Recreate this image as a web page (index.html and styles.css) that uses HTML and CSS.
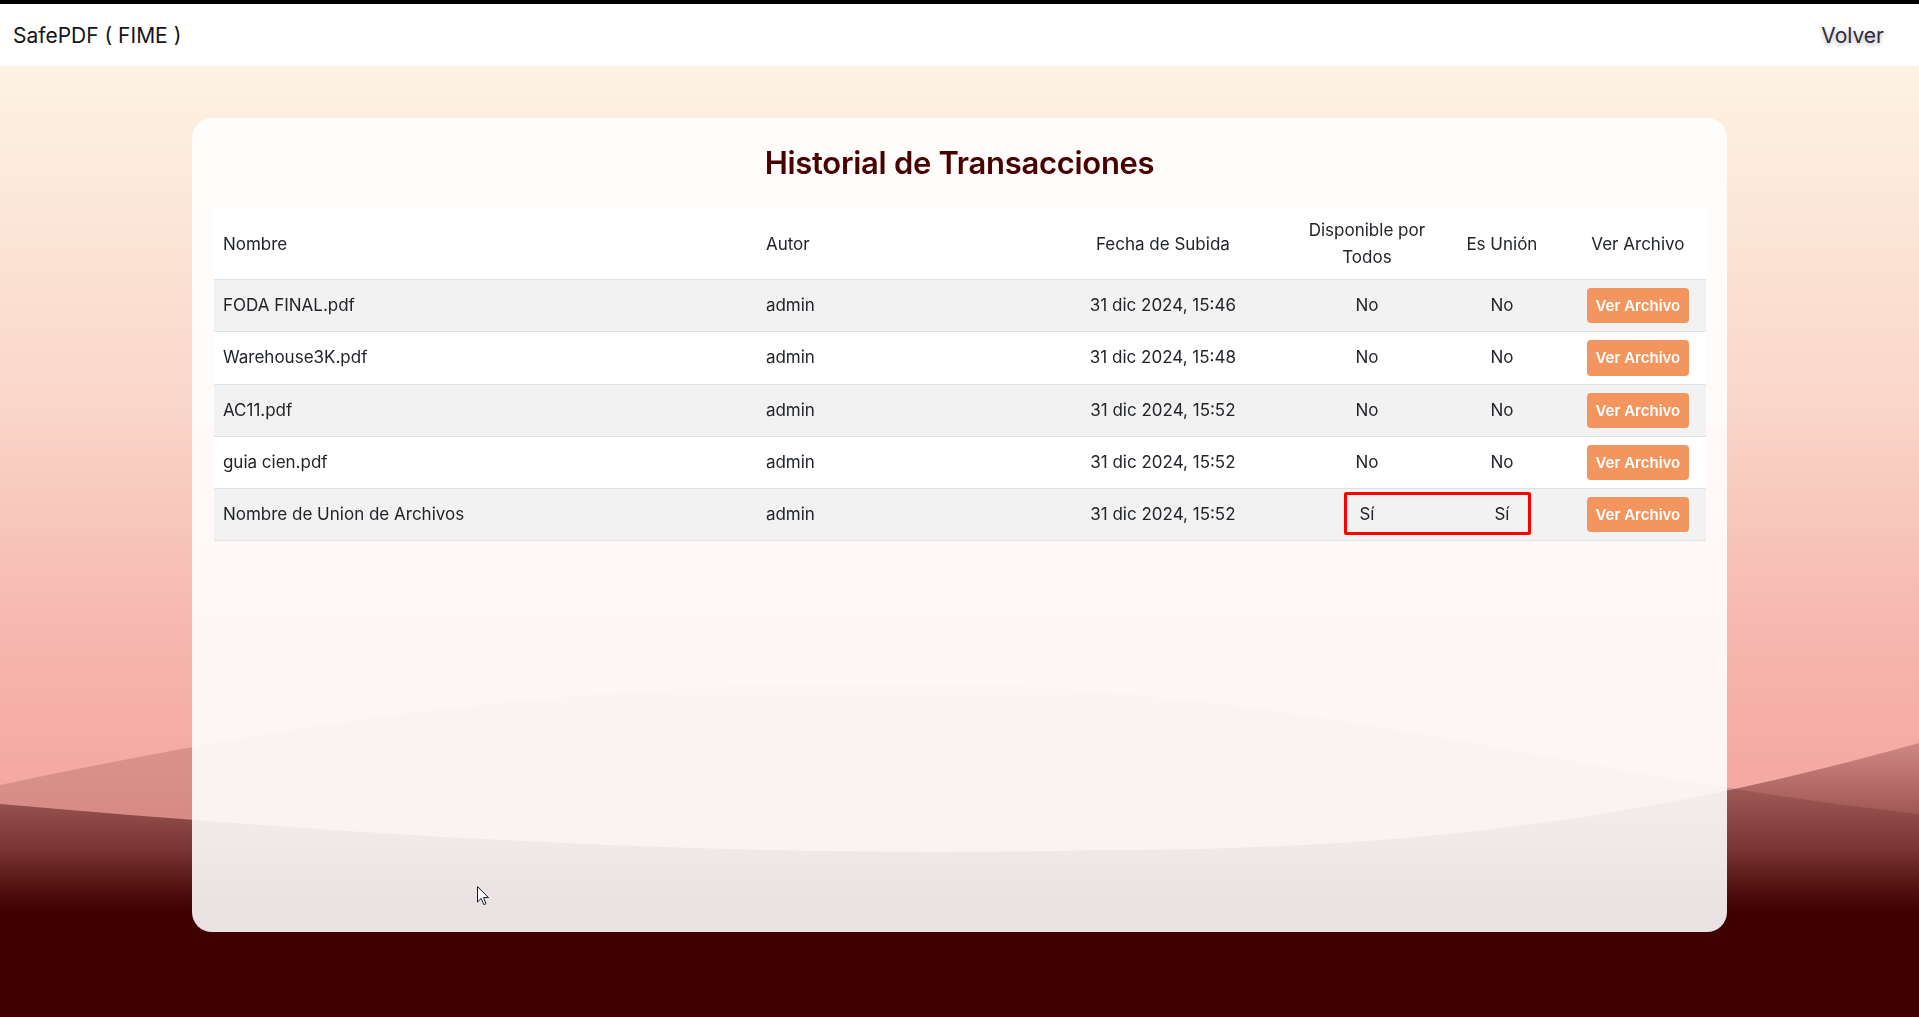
FILE: index.html
```html
<!DOCTYPE html>
<html lang="es">
<head>
<meta charset="utf-8">
<title>Historial de Transacciones - SafePDF</title>
<link rel="stylesheet" href="styles.css">
</head>
<body>
<div class="bg" aria-hidden="true">
  <svg viewBox="0 0 1919 1017" preserveAspectRatio="none" xmlns="http://www.w3.org/2000/svg">
    <defs>
      <linearGradient id="base" x1="0" y1="0" x2="0" y2="1017" gradientUnits="userSpaceOnUse">
        <stop offset="0" stop-color="#fdf3e3"/>
        <stop offset="0.064" stop-color="#fdf3e3"/>
        <stop offset="0.4" stop-color="#fad6c8"/>
        <stop offset="0.65" stop-color="#f6b3ac"/>
        <stop offset="0.8" stop-color="#f4a6a0"/>
        <stop offset="1" stop-color="#f2a09a"/>
      </linearGradient>
      <linearGradient id="w1" x1="0" y1="685" x2="0" y2="920" gradientUnits="userSpaceOnUse">
        <stop offset="0" stop-color="#400000" stop-opacity="0.14"/>
        <stop offset="1" stop-color="#400000" stop-opacity="0.18"/>
      </linearGradient>
      <linearGradient id="w2" x1="0" y1="740" x2="0" y2="912" gradientUnits="userSpaceOnUse">
        <stop offset="0" stop-color="#400000" stop-opacity="0.2"/>
        <stop offset="0.448" stop-color="#400000" stop-opacity="0.48"/>
        <stop offset="0.64" stop-color="#400000" stop-opacity="0.62"/>
        <stop offset="0.83" stop-color="#400000" stop-opacity="0.84"/>
        <stop offset="1" stop-color="#400000" stop-opacity="1"/>
      </linearGradient>
    </defs>
    <rect x="0" y="0" width="1919" height="1017" fill="url(#base)"/>
    <path d="M0,785 C400,700 650,680 960,685 C1300,690 1600,780 1919,814 L1919,1017 L0,1017 Z" fill="url(#w1)"/>
    <path d="M0,804 C300,830 700,860 1100,850 C1450,850 1680,810 1919,743 L1919,1017 L0,1017 Z" fill="url(#w2)"/>
    <rect x="0" y="911" width="1919" height="106" fill="#400000"/>
  </svg>
</div>

<nav class="navbar">
  <span class="brand">SafePDF ( FIME )</span>
  <a class="nav-link" href="#">Volver</a>
</nav>

<main class="page">
  <section class="card">
    <h2 class="title">Historial de Transacciones</h2>
    <table class="tx-table">
      <colgroup>
        <col class="c-name">
        <col class="c-author">
        <col class="c-date">
        <col class="c-avail">
        <col class="c-union">
        <col class="c-view">
      </colgroup>
      <thead>
        <tr>
          <th class="left">Nombre</th>
          <th class="left">Autor</th>
          <th>Fecha de Subida</th>
          <th>Disponible por<br>Todos</th>
          <th>Es Unión</th>
          <th>Ver Archivo</th>
        </tr>
      </thead>
      <tbody>
        <tr>
          <td class="left">FODA FINAL.pdf</td>
          <td class="left">admin</td>
          <td>31 dic 2024, 15:46</td>
          <td>No</td>
          <td>No</td>
          <td><a class="btn" href="#">Ver Archivo</a></td>
        </tr>
        <tr>
          <td class="left">Warehouse3K.pdf</td>
          <td class="left">admin</td>
          <td>31 dic 2024, 15:48</td>
          <td>No</td>
          <td>No</td>
          <td><a class="btn" href="#">Ver Archivo</a></td>
        </tr>
        <tr>
          <td class="left">AC11.pdf</td>
          <td class="left">admin</td>
          <td>31 dic 2024, 15:52</td>
          <td>No</td>
          <td>No</td>
          <td><a class="btn" href="#">Ver Archivo</a></td>
        </tr>
        <tr>
          <td class="left">guia cien.pdf</td>
          <td class="left">admin</td>
          <td>31 dic 2024, 15:52</td>
          <td>No</td>
          <td>No</td>
          <td><a class="btn" href="#">Ver Archivo</a></td>
        </tr>
        <tr>
          <td class="left">Nombre de Union de Archivos</td>
          <td class="left">admin</td>
          <td>31 dic 2024, 15:52</td>
          <td class="marked">Sí<span class="highlight"></span></td>
          <td>Sí</td>
          <td><a class="btn" href="#">Ver Archivo</a></td>
        </tr>
      </tbody>
    </table>
  </section>
</main>

<svg class="cursor" viewBox="0 0 13 20" xmlns="http://www.w3.org/2000/svg" aria-hidden="true">
  <path d="M0.5,0.5 L0.5,16 L4.2,12.4 L6.8,18.6 L9,17.7 L6.5,11.6 L11.5,11.6 Z" fill="#ffffff" stroke="#1a1a2a" stroke-width="1" stroke-linejoin="round"/>
</svg>
</body>
</html>
```

FILE: styles.css
```css
html, body {
  margin: 0;
  height: 100%;
}

body {
  font-family: Inter, "Noto Sans", "Liberation Sans", sans-serif;
  color: #212529;
  position: relative;
  min-height: 100vh;
  overflow: hidden;
  background: #400000;
}

.bg {
  position: fixed;
  inset: 0;
  z-index: 0;
}

.bg svg {
  display: block;
  width: 100%;
  height: 100%;
}

.navbar {
  position: relative;
  z-index: 1;
  height: 62px;
  border-top: 4px solid #000;
  background: #fff;
  display: flex;
  align-items: center;
  justify-content: space-between;
  padding: 0 35px 0 13px;
}

.brand {
  font-size: 21px;
  color: #141414;
}

.nav-link {
  font-size: 21px;
  color: #302c38;
  text-decoration: none;
  text-shadow: 0 2px 4px rgba(0, 0, 0, 0.3);
}

.page {
  position: relative;
  z-index: 1;
  padding-top: 52px;
  display: flex;
  justify-content: center;
}

.card {
  width: 80%;
  height: 80vh;
  box-sizing: border-box;
  padding: 26px 22px;
  background: rgba(255, 255, 255, 0.89);
  border-radius: 20px;
}

.title {
  margin: 0 0 27px;
  text-align: center;
  font-size: 31px;
  font-weight: 600;
  letter-spacing: -0.3px;
  line-height: 38px;
  color: #4a0000;
}

.tx-table {
  width: 100%;
  border-collapse: collapse;
  table-layout: fixed;
  font-size: 17px;
}

.c-name { width: 543px; }
.c-author { width: 269px; }
.c-date { width: 274px; }
.c-avail { width: 134px; }
.c-union { width: 136px; }
.c-view { width: 136px; }

.tx-table th,
.tx-table td {
  padding: 8px 8px;
  line-height: 27px;
  font-weight: 400;
  text-align: center;
  vertical-align: middle;
  border-bottom: 1px solid #dee2e6;
  white-space: nowrap;
}

.tx-table th.left,
.tx-table td.left {
  text-align: left;
  padding-left: 9px;
}

.tx-table thead tr {
  background: #fff;
}

.tx-table tbody tr:nth-child(odd) {
  background: #f2f2f2;
}

.tx-table tbody tr:nth-child(even) {
  background: #fff;
}

.btn {
  display: block;
  width: fit-content;
  margin: 0 auto;
  padding: 8px 9px;
  background: #f2955e;
  color: #fff;
  font-size: 15px;
  font-weight: 600;
  line-height: 19.3px;
  border-radius: 4px;
  text-decoration: none;
}

.marked {
  position: relative;
}

.highlight {
  position: absolute;
  left: 44px;
  top: 3px;
  width: 187px;
  height: 43px;
  box-sizing: border-box;
  border: 3px solid #ff0000;
  border-radius: 2px;
  pointer-events: none;
}

.cursor {
  position: fixed;
  left: 477px;
  top: 886px;
  width: 13px;
  height: 20px;
  z-index: 5;
}
```
